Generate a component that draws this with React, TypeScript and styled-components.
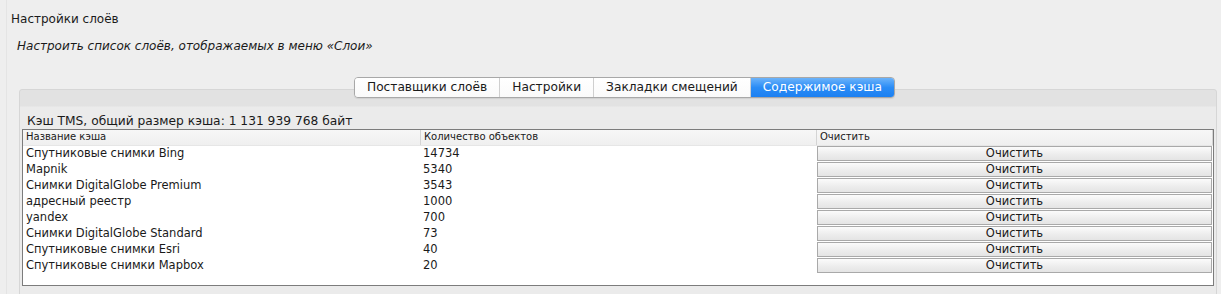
import React from "react";
import styled, { createGlobalStyle } from "styled-components";

const GlobalStyle = createGlobalStyle`
  html, body {
    margin: 0;
    padding: 0;
    background: #eeeeee;
  }
  body {
    font-family: "DejaVu Sans", "Noto Sans", sans-serif;
    color: #1a1a1a;
  }
`;

const cacheRows = [
  { name: "Спутниковые снимки Bing", count: "14734" },
  { name: "Mapnik", count: "5340" },
  { name: "Снимки DigitalGlobe Premium", count: "3543" },
  { name: "адресный реестр", count: "1000" },
  { name: "yandex", count: "700" },
  { name: "Снимки DigitalGlobe Standard", count: "73" },
  { name: "Спутниковые снимки Esri", count: "40" },
  { name: "Спутниковые снимки Mapbox", count: "20" },
];

const tabs = [
  "Поставщики слоёв",
  "Настройки",
  "Закладки смещений",
  "Содержимое кэша",
];

const Page = styled.div`
  height: 294px;
  overflow: hidden;
  background: #eeeeee;
  border-left: 1px solid #e4e4e4;
  margin-left: 6px;
  padding-top: 11px;
`;

const Title = styled.div`
  font-size: 12px;
  line-height: 16px;
  padding-left: 4px;
`;

const Subtitle = styled.div`
  font-size: 12px;
  font-style: italic;
  line-height: 16px;
  padding-left: 10px;
  margin-top: 11px;
`;

const TabArea = styled.div`
  margin: 23px 4px 0 12px;
`;

const TabBar = styled.div`
  position: relative;
  z-index: 1;
  display: flex;
  justify-content: center;
  padding-left: 13px;
  margin-bottom: -9px;
`;

const TabGroup = styled.div`
  display: flex;
  border: 1px solid #a8a8a8;
  border-radius: 4px;
  overflow: hidden;
  box-shadow: 0 1px 1px rgba(0, 0, 0, 0.08);
`;

const Tab = styled.div<{ $active?: boolean }>`
  height: 19px;
  line-height: 19px;
  padding: 0 12px;
  font-size: 12.2px;
  white-space: nowrap;
  color: ${({ $active }) => ($active ? "#ffffff" : "#1a1a1a")};
  background: ${({ $active }) =>
    $active
      ? "linear-gradient(#6cb3fa, #2a8cf6 50%, #1c80f1)"
      : "linear-gradient(#ffffff, #fafafa)"};
  & + & {
    border-left: 1px solid #cfcfcf;
  }
`;

const Panel = styled.div`
  border: 1px solid #d6d6d6;
  border-radius: 3px;
  background: linear-gradient(#e2e2e2 0, #e2e2e2 16px, #ebebeb 17px);
  padding: 23px 2px 0 2px;
  height: 240px;
`;

const CacheSummary = styled.div`
  font-size: 12.25px;
  line-height: 16px;
  padding-left: 5px;
`;

const Table = styled.div`
  border: 1px solid #7c7c7c;
  background: #ffffff;
  height: 155px;
`;

const Row = styled.div`
  display: grid;
  grid-template-columns: 397px 396px 1fr;
  height: 16px;
  box-sizing: border-box;
`;

const HeaderRow = styled(Row)`
  background: linear-gradient(#f7f7f7, #efefef);
  border-bottom: 1px solid #e6e6e6;
`;

const HeaderCell = styled.div`
  font-size: 10px;
  line-height: 14px;
  padding-left: 3px;
  border-left: 1px solid #d4d4d4;
  &:first-child {
    border-left: none;
  }
  &:last-child {
    border-right: 1px solid #d4d4d4;
  }
`;

const Cell = styled.div`
  font-size: 11.5px;
  line-height: 15px;
  padding-left: 3px;
  white-space: nowrap;
`;

const ClearButton = styled.button`
  font-family: inherit;
  font-size: 11.5px;
  color: #1a1a1a;
  height: 15px;
  line-height: 13px;
  padding: 0;
  margin: 0 1px;
  border: 1px solid #a9a9a9;
  background: linear-gradient(#fbfbfb, #ececec 60%, #e4e4e4);
  cursor: default;
`;

export default function App() {
  return (
    <>
      <GlobalStyle />
      <Page>
        <Title>Настройки слоёв</Title>
        <Subtitle>Настроить список слоёв, отображаемых в меню «Слои»</Subtitle>
        <TabArea>
          <TabBar>
            <TabGroup>
              {tabs.map((t, i) => (
                <Tab key={t} $active={i === tabs.length - 1}>
                  {t}
                </Tab>
              ))}
            </TabGroup>
          </TabBar>
          <Panel>
            <CacheSummary>Кэш TMS, общий размер кэша: 1 131 939 768 байт</CacheSummary>
            <Table>
              <HeaderRow>
                <HeaderCell>Название кэша</HeaderCell>
                <HeaderCell>Количество объектов</HeaderCell>
                <HeaderCell>Очистить</HeaderCell>
              </HeaderRow>
              {cacheRows.map((r) => (
                <Row key={r.name}>
                  <Cell>{r.name}</Cell>
                  <Cell>{r.count}</Cell>
                  <ClearButton>Очистить</ClearButton>
                </Row>
              ))}
            </Table>
          </Panel>
        </TabArea>
      </Page>
    </>
  );
}
